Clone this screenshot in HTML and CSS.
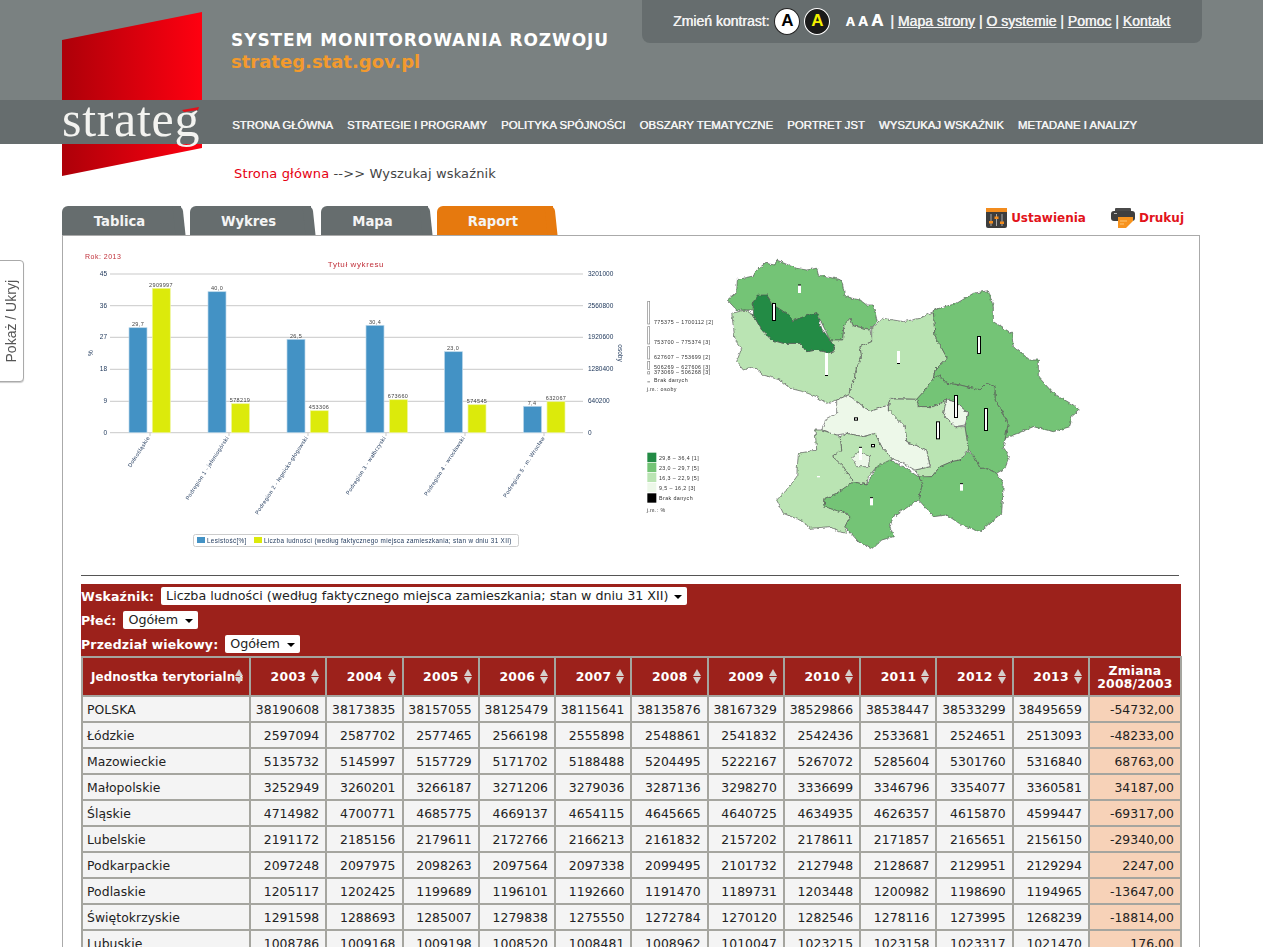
FILE: index.html
```html
<!DOCTYPE html>
<html lang="pl">
<head>
<meta charset="utf-8">
<title>Strateg</title>
<link rel="stylesheet" href="styles.css">
</head>
<body>
<div class="logo">
  <svg class="logo-mark" width="140" height="164" viewBox="0 0 140 164">
    <defs><linearGradient id="lg" x1="0" x2="1" y1="0" y2="0"><stop offset="0" stop-color="#ad0009"/><stop offset="1" stop-color="#ff0010"/></linearGradient></defs>
    <polygon points="0,28 140,0 140,136 0,164" fill="url(#lg)"/>
  </svg>
</div>
<header class="top">
  <div class="site-title">
    <div class="site-name">SYSTEM MONITOROWANIA ROZWOJU</div>
    <div class="site-url">strateg.stat.gov.pl</div>
  </div>
  <div class="tools">
    <span>Zmień kontrast:</span>
    <span class="contrast contrast-w">A</span>
    <span class="contrast contrast-b">A</span>
    <span class="sizes"><span class="s1">A</span><span class="s2">A</span><span class="s3">A</span></span>
    <span class="links">| <a href="#">Mapa strony</a> | <a href="#">O systemie</a> | <a href="#">Pomoc</a> | <a href="#">Kontakt</a></span>
  </div>
</header>
<nav class="nav">
  <div class="logo-word">strateg<svg class="flick" width="17" height="5" viewBox="0 0 17 5"><polygon points="0,3 17,0 16,3 2,5" fill="#e3101a"/></svg></div>
  <a href="#">STRONA GŁÓWNA</a><a href="#">STRATEGIE I PROGRAMY</a><a href="#">POLITYKA SPÓJNOŚCI</a><a href="#">OBSZARY TEMATYCZNE</a><a href="#">PORTRET JST</a><a href="#">WYSZUKAJ WSKAŹNIK</a><a href="#">METADANE I ANALIZY</a>
</nav>
<div class="crumb"><a href="#">Strona główna</a> --&gt;&gt; Wyszukaj wskaźnik</div>
<div class="tabbar">
  <a class="tab t1" href="#">Tablica</a>
  <a class="tab t2" href="#">Wykres</a>
  <a class="tab t3" href="#">Mapa</a>
  <a class="tab t4 active" href="#">Raport</a>
  <div class="actions">
    <a class="action act-set" href="#">
      <svg width="21" height="20" viewBox="0 0 21 20"><rect x="0" y="0" width="21" height="20" rx="2" fill="#3d3d3d"/><rect x="0" y="0" width="21" height="4" fill="#f28c1e"/><path d="M5 6v12M10.500 6v12M16 6v12" stroke="#aaa" stroke-width="1"/><rect x="3" y="13" width="4" height="2.500" fill="#f28c1e"/><rect x="8.500" y="8.500" width="4" height="2.500" fill="#f28c1e"/><rect x="14" y="13.500" width="4" height="2.500" fill="#f28c1e"/></svg>
      <span>Ustawienia</span>
    </a>
    <a class="action act-print" href="#">
      <svg width="24" height="20" viewBox="0 0 24 20"><rect x="4" y="0" width="16" height="4" rx="1" fill="#4a4a4a"/><path d="M3 3h18a3 3 0 0 1 3 3v4a3 3 0 0 1-3 3H3a3 3 0 0 1-3-3V6a3 3 0 0 1 3-3z" fill="#3f3f3f"/><rect x="3" y="5" width="3" height="1" fill="#bbb"/><path d="M7 9h15v4l-7 7H7z" fill="#f7931e"/><path d="M9 13h7M9 16h4" stroke="#ffc877" stroke-width="1"/></svg>
      <span>Drukuj</span>
    </a>
  </div>
</div>
<main class="panel">
  <div class="graphs">
    <svg class="chart" width="559" height="310" viewBox="81 245 559 310">
      <g class="grid">
        <path d="M110 274H583M110 305.700H583M110 337.300H583M110 369.300H583M110 401.300H583M110 432.700H583"/>
        <path d="M150 433v3M229 433v3M308 433v3M386 433v3M465 433v3M544 433v3"/>
      </g>
      <text class="rok" x="85" y="259">Rok: 2013</text>
      <text class="ctitle" x="356" y="267">Tytuł wykresu</text>
      <g class="ytick lefty">
        <text x="107" y="276">45</text><text x="107" y="308">36</text><text x="107" y="339">27</text><text x="107" y="371">18</text><text x="107" y="403">9</text><text x="107" y="435">0</text>
      </g>
      <g class="ytick">
        <text x="588" y="276">3201000</text><text x="588" y="308">2560800</text><text x="588" y="339">1920600</text><text x="588" y="371">1280400</text><text x="588" y="403">640200</text><text x="588" y="435">0</text>
      </g>
      <text class="ytick axis" transform="translate(93 353) rotate(-90)">%</text>
      <text class="ytick axis" transform="translate(618 353) rotate(90)">osoby</text>
      <g class="bars-a">
        <rect x="129" y="327.700" width="18" height="105"/><rect x="208" y="291.700" width="18" height="141"/><rect x="287" y="339.300" width="18" height="93.400"/><rect x="366" y="325.300" width="18" height="107.400"/><rect x="444.500" y="351.700" width="18" height="81"/><rect x="523.500" y="406.300" width="18" height="26.400"/>
      </g>
      <g class="bars-b">
        <rect x="152.300" y="288.300" width="18" height="144.400"/><rect x="231.500" y="403.700" width="18" height="29"/><rect x="310.300" y="410.700" width="18" height="22"/><rect x="389.500" y="399.700" width="18" height="33"/><rect x="468" y="404.700" width="18" height="28"/><rect x="547" y="401.700" width="18" height="31"/>
      </g>
      <g class="vals">
        <text x="138" y="326">29,7</text><text x="161" y="287">2909997</text><text x="217" y="290">40,0</text><text x="240" y="402">578219</text><text x="296" y="338">26,5</text><text x="319" y="409">453306</text><text x="375" y="324">30,4</text><text x="398" y="398">673660</text><text x="453" y="350">23,0</text><text x="477" y="403">574545</text><text x="532" y="405">7,4</text><text x="556" y="400">632067</text>
      </g>
      <g class="cats">
        <text transform="translate(150 438) rotate(-57)">Dolnośląskie</text>
        <text transform="translate(229 438) rotate(-57)">Podregion 1 - jeleniogórski</text>
        <text transform="translate(308 438) rotate(-57)">Podregion 2 - legnicko-głogowski</text>
        <text transform="translate(386 438) rotate(-57)">Podregion 3 - wałbrzyski</text>
        <text transform="translate(465 438) rotate(-57)">Podregion 4 - wrocławski</text>
        <text transform="translate(545 438) rotate(-57)">Podregion 5 - m. Wrocław</text>
      </g>
      <rect class="lbox" x="193.500" y="534.500" width="325" height="12" rx="2"/>
      <rect x="197" y="537" width="8" height="6" fill="#4392c5"/>
      <text class="ltext" x="207" y="543">Lesistość[%]</text>
      <rect x="254" y="537" width="8" height="6" fill="#dcea0b"/>
      <text class="ltext" x="264" y="543">Liczba ludności (według faktycznego miejsca zamieszkania; stan w dniu 31 XII)</text>
    </svg>
    <svg class="map" width="450" height="310" viewBox="0 0 1350 930">
      <defs><filter id="rough" x="-5%" y="-5%" width="110%" height="110%" color-interpolation-filters="sRGB"><feTurbulence type="fractalNoise" baseFrequency="0.09" numOctaves="2" seed="4"/><feDisplacementMap in="SourceGraphic" scale="11" xChannelSelector="R" yChannelSelector="G"/></filter></defs>
      <g class="regions" filter="url(#rough)">
        <polygon class="c2" points="262,150 290,125 292,88 340,78 350,60 375,40 405,45 410,30 445,45 470,55 500,60 530,55 535,75 605,90 615,140 660,150 680,165 700,165 712,215 690,238 640,228 630,205 612,225 608,270 570,270 530,188 460,212 400,165 380,135 340,155 340,180 290,180"/>
        <polygon class="c3" points="275,190 315,180 340,195 365,240 395,270 430,280 480,280 500,305 530,300 575,310 585,295 570,270 608,270 612,225 630,205 640,228 690,238 695,275 660,290 665,320 650,350 640,400 625,435 590,450 560,460 530,440 490,425 450,415 420,390 370,375 340,350 310,360 290,335 305,295 285,270"/>
        <polygon class="c1" points="340,155 355,135 380,135 400,165 440,190 460,212 490,200 530,188 545,235 570,270 585,295 575,310 530,300 500,305 480,280 430,280 395,270 365,240 340,195"/>
        <polygon class="c3" points="695,235 730,205 790,215 840,205 880,185 885,260 900,285 922,325 885,360 880,385 860,415 830,448 750,445 745,465 690,485 625,435 640,400 650,350 665,320 660,290 695,275"/>
        <polygon class="c2" points="880,180 950,160 1000,130 1045,122 1060,170 1060,215 1115,250 1120,290 1170,330 1195,330 1195,380 1240,430 1300,465 1318,480 1295,500 1290,530 1240,545 1180,530 1145,545 1095,565 1105,520 1065,450 1065,410 1040,400 1020,420 960,405 920,400 900,375 880,385 885,360 922,325 900,285 885,260"/>
        <polygon class="c2" points="830,448 860,415 880,385 900,375 920,400 960,405 1020,420 1040,400 1065,410 1065,450 1105,520 1095,565 1090,595 1108,620 1095,655 1070,670 1040,655 1020,655 1005,625 985,600 975,530 985,490 945,455 920,450 880,470 835,470"/>
        <polygon class="c3" points="750,447 830,448 835,470 880,470 920,450 910,495 945,530 975,530 985,600 960,630 935,635 900,650 875,680 840,685 825,660 870,650 860,600 800,575 795,530 745,480"/>
        <polygon class="c4" points="920,450 945,455 985,490 975,525 945,530 910,495"/>
        <polygon class="c4" points="590,450 625,435 690,485 745,465 745,480 795,530 800,575 860,600 870,650 825,660 790,640 755,625 725,590 705,550 670,560 620,550 590,555 545,540 560,505 590,490"/>
        <polygon class="c3" points="600,560 620,550 670,560 705,550 725,590 755,625 750,650 710,650 685,680 680,705 640,695 610,650 578,620 605,600"/>
        <polygon class="c4" points="635,620 655,605 690,620 685,650 650,650"/>
        <polygon class="c3" points="525,540 545,540 590,555 600,560 605,600 578,620 610,650 640,695 620,710 590,730 555,745 552,770 620,790 630,800 615,830 620,850 595,845 570,830 510,835 490,815 430,790 410,750 445,715 470,680 475,610 530,600"/>
        <polygon class="c2" points="552,770 555,745 590,730 640,695 680,705 710,650 750,630 790,650 835,680 848,700 835,750 760,800 750,830 760,860 725,870 700,895 660,880 615,830 630,800 620,790"/>
        <polygon class="c2" points="835,680 875,680 900,650 935,635 960,630 985,605 1005,625 1020,655 1040,655 1070,670 1090,700 1085,790 1060,810 1020,845 965,825 920,795 880,800 845,760 835,750 848,700"/>
      </g>
      <g class="mbars">
        <rect x="397.500" y="160.500" width="9" height="51"/><rect x="1012.500" y="259.500" width="9" height="51"/><rect x="943.500" y="436.500" width="9" height="66"/><rect x="1033.500" y="475.500" width="9" height="66"/><rect x="889.500" y="515.500" width="9" height="51"/><rect x="643.500" y="503.500" width="9" height="7"/><rect x="694.500" y="583.500" width="9" height="7"/>
      </g>
      <g class="mbars-open">
        <rect x="474" y="105" width="9" height="24"/><rect x="555" y="309" width="9" height="69"/><rect x="771" y="303" width="9" height="39"/><rect x="657" y="591" width="9" height="39"/><rect x="531" y="678" width="9" height="4"/><rect x="690" y="742" width="9" height="24"/><rect x="960" y="700" width="9" height="22"/>
      </g>
      <g class="mticks">
        <path d="M474 105h9M555 376.500h9M771 340.500h9M657 592h9M690 743h9M960 701h9"/>
      </g>
      <g class="lbars">
        <rect x="23" y="154" width="6" height="68"/><rect x="23" y="230" width="6" height="52"/><rect x="23" y="290" width="6" height="37"/><rect x="23" y="334" width="6" height="24"/><rect x="23" y="365" width="6" height="7"/><rect x="23" y="395" width="6" height="1"/>
      </g>
      <g class="mtext">
        <text x="42" y="221">775375 – 1700112 [2]</text><text x="42" y="281">753700 – 775374 [3]</text><text x="42" y="326">627607 – 753699 [2]</text><text x="42" y="357">506269 – 627606 [3]</text><text x="42" y="372">373069 – 506268 [3]</text><text x="42" y="395">Brak danych</text><text x="20" y="423">j.m.: osoby</text>
        <text x="57" y="629">29,8 – 36,4 [1]</text><text x="57" y="659">23,0 – 29,7 [5]</text><text x="57" y="689">16,3 – 22,9 [5]</text><text x="57" y="719">9,5 – 16,2 [3]</text><text x="57" y="749">Brak danych</text><text x="20" y="785">j.m.: %</text>
      </g>
      <rect class="c1" x="22" y="608" width="27" height="28"/><rect class="c2" x="22" y="638" width="27" height="28"/><rect class="c3" x="22" y="668" width="27" height="28"/><rect class="c4" x="22" y="698" width="27" height="28"/><rect x="22" y="730" width="27" height="28" fill="#000"/>
    </svg>
  </div>
  <hr class="rule">
  <section class="report">
    <div class="filters">
      <div class="filter"><label>Wskaźnik:</label><div class="select sel-long"><span>Liczba ludności (według faktycznego miejsca zamieszkania; stan w dniu 31 XII)</span></div></div>
      <div class="filter"><label>Płeć:</label><div class="select sel-short"><span>Ogółem</span></div></div>
      <div class="filter"><label>Przedział wiekowy:</label><div class="select sel-short"><span>Ogółem</span></div></div>
    </div>
    <table class="data">
      <colgroup><col class="col-name"><col class="col-y"><col class="col-y"><col class="col-y"><col class="col-y"><col class="col-y"><col class="col-y"><col class="col-y"><col class="col-y"><col class="col-y"><col class="col-y"><col class="col-y"><col class="col-z"></colgroup>
      <thead>
        <tr>
          <th class="name-h">Jednostka terytorialna<i class="sort"></i></th>
          <th>2003<i class="sort"></i></th><th>2004<i class="sort"></i></th><th>2005<i class="sort"></i></th><th>2006<i class="sort"></i></th><th>2007<i class="sort"></i></th><th>2008<i class="sort"></i></th><th>2009<i class="sort"></i></th><th>2010<i class="sort"></i></th><th>2011<i class="sort"></i></th><th>2012<i class="sort"></i></th><th>2013<i class="sort"></i></th>
          <th class="z-h">Zmiana<br>2008/2003</th>
        </tr>
      </thead>
      <tbody>
        <tr><td>POLSKA</td><td>38190608</td><td>38173835</td><td>38157055</td><td>38125479</td><td>38115641</td><td>38135876</td><td>38167329</td><td>38529866</td><td>38538447</td><td>38533299</td><td>38495659</td><td>-54732,00</td></tr>
        <tr><td>Łódzkie</td><td>2597094</td><td>2587702</td><td>2577465</td><td>2566198</td><td>2555898</td><td>2548861</td><td>2541832</td><td>2542436</td><td>2533681</td><td>2524651</td><td>2513093</td><td>-48233,00</td></tr>
        <tr><td>Mazowieckie</td><td>5135732</td><td>5145997</td><td>5157729</td><td>5171702</td><td>5188488</td><td>5204495</td><td>5222167</td><td>5267072</td><td>5285604</td><td>5301760</td><td>5316840</td><td>68763,00</td></tr>
        <tr><td>Małopolskie</td><td>3252949</td><td>3260201</td><td>3266187</td><td>3271206</td><td>3279036</td><td>3287136</td><td>3298270</td><td>3336699</td><td>3346796</td><td>3354077</td><td>3360581</td><td>34187,00</td></tr>
        <tr><td>Śląskie</td><td>4714982</td><td>4700771</td><td>4685775</td><td>4669137</td><td>4654115</td><td>4645665</td><td>4640725</td><td>4634935</td><td>4626357</td><td>4615870</td><td>4599447</td><td>-69317,00</td></tr>
        <tr><td>Lubelskie</td><td>2191172</td><td>2185156</td><td>2179611</td><td>2172766</td><td>2166213</td><td>2161832</td><td>2157202</td><td>2178611</td><td>2171857</td><td>2165651</td><td>2156150</td><td>-29340,00</td></tr>
        <tr><td>Podkarpackie</td><td>2097248</td><td>2097975</td><td>2098263</td><td>2097564</td><td>2097338</td><td>2099495</td><td>2101732</td><td>2127948</td><td>2128687</td><td>2129951</td><td>2129294</td><td>2247,00</td></tr>
        <tr><td>Podlaskie</td><td>1205117</td><td>1202425</td><td>1199689</td><td>1196101</td><td>1192660</td><td>1191470</td><td>1189731</td><td>1203448</td><td>1200982</td><td>1198690</td><td>1194965</td><td>-13647,00</td></tr>
        <tr><td>Świętokrzyskie</td><td>1291598</td><td>1288693</td><td>1285007</td><td>1279838</td><td>1275550</td><td>1272784</td><td>1270120</td><td>1282546</td><td>1278116</td><td>1273995</td><td>1268239</td><td>-18814,00</td></tr>
        <tr><td>Lubuskie</td><td>1008786</td><td>1009168</td><td>1009198</td><td>1008520</td><td>1008481</td><td>1008962</td><td>1010047</td><td>1023215</td><td>1023158</td><td>1023317</td><td>1021470</td><td>176,00</td></tr>
      </tbody>
    </table>
  </section>
</main>
<aside class="side"><span>Pokaż / Ukryj</span></aside>
</body>
</html>
```
FILE: styles.css
```css
html, body { margin: 0; padding: 0; height: 947px; overflow: hidden; background: #fff; }
body { position: relative; font-family: "DejaVu Sans", Verdana, sans-serif; color: #333; }
a { color: inherit; text-decoration: none; }

.logo { position: absolute; left: 62px; top: 12px; z-index: 1; line-height: 0; }

.top { height: 100px; background: #7a8181; position: relative; display: flex; align-items: flex-start; }
.site-title { margin: 30px 0 0 231px; position: relative; z-index: 2; font-weight: bold; width: 411px; }
.site-name { font-size: 17px; line-height: 20px; color: #fff; letter-spacing: 0.92px; white-space: nowrap; }
.site-url { font-size: 18px; line-height: 24px; color: #f39a2d; white-space: nowrap; }

.tools { width: 560px; height: 43px; box-sizing: border-box; background: #666d6e; border-radius: 0 0 8px 8px; display: flex; align-items: center; padding: 0 0 1px 31px; font-family: "Liberation Sans", Arial, sans-serif; font-size: 14px; color: #f2f2f2; white-space: nowrap; text-shadow: 0.4px 0 0 #f2f2f2; }
.contrast { width: 24px; height: 25px; border: 1px solid #222; border-radius: 50%; display: flex; align-items: center; justify-content: center; font-size: 17px; font-weight: bold; text-shadow: none; }
.contrast-w { background: #fff; color: #000; margin-left: 5px; }
.contrast-b { background: #1a1a1a; color: #f4f000; margin-left: 4px; border-color: #fff; }
.sizes { margin-left: 15px; display: flex; align-items: baseline; gap: 3px; color: #fff; font-weight: bold; }
.s1 { font-size: 13px; } .s2 { font-size: 14px; } .s3 { font-size: 17px; }
.links { margin-left: 7px; }
.links a { text-decoration: underline; }

.nav { height: 44px; box-sizing: border-box; padding: 5px 0 0 232px; background: #666d6e; position: relative; z-index: 2; display: flex; align-items: center; gap: 14px; font-family: "Liberation Sans", Arial, sans-serif; font-size: 11.430px; color: #f4f4f4; white-space: nowrap; }
.nav a { text-shadow: 0.4px 0 0 #f4f4f4; }
.logo-word { position: absolute; left: 62px; top: -6px; font-family: "Liberation Serif", serif; font-size: 50px; line-height: 50px; color: #f3f3f0; letter-spacing: 0.7px; }
.flick { position: absolute; right: 1px; top: 13px; }

.crumb { margin: 22px 0 0 234px; font-size: 13px; line-height: 16px; color: #444; position: relative; z-index: 2; letter-spacing: 0.14px; }
.crumb a { color: #e60012; }

.tabbar { display: flex; margin: 24px 0 0 62px; height: 29px; position: relative; z-index: 2; width: 1137px; }
.tab { position: relative; display: flex; align-items: center; justify-content: center; height: 29px; box-sizing: border-box; background: #666d6e; color: #f4f4f4; font-size: 13.200px; font-weight: bold; border-radius: 6px 0 0 0; padding: 2px 4px 0 0; }
.tab::after { content: ""; position: absolute; right: -3px; top: 0; bottom: 0; width: 10px; background: inherit; border-radius: 0 5px 0 0; transform: skewX(6deg); }
.t1 { width: 119px; margin-right: 9px; }
.t2 { width: 121px; margin-right: 10px; }
.t3 { width: 107px; margin-right: 9px; }
.t4 { width: 116px; }
.tab.active { background: #e6790e; }
.actions { margin-left: auto; margin-right: 15px; display: flex; gap: 25px; align-items: flex-start; margin-top: 2px; }
.action { display: flex; align-items: center; gap: 4px; color: #e2131b; font-size: 12px; font-weight: bold; height: 20px; }

.panel { margin-left: 62px; width: 1118px; height: 712px; border: 1px solid #aaa; position: relative; padding: 9px 0 0 18px; box-sizing: content-box; }
.graphs { display: flex; align-items: flex-start; height: 315px; }
.chart, .map { display: block; flex: none; filter: blur(0.3px); }
.map { margin-top: 5px; }
.grid path { stroke: #c9c9c9; stroke-width: 1; fill: none; }
.chart text { font-family: "Liberation Sans", Arial, sans-serif; }
.rok { font-size: 7px; fill: #c0303a; letter-spacing: 0.5px; }
.ctitle { font-size: 8px; fill: #c0303a; text-anchor: middle; letter-spacing: 0.6px; }
.ytick text, .ytick.axis { font-size: 6.500px; fill: #20395c; }
.lefty text { text-anchor: end; }
.axis { text-anchor: middle; }
.bars-a rect { fill: #4392c5; stroke: #bcd8ea; stroke-width: 0.7; }
.bars-b rect { fill: #dcea0b; stroke: #eef6a0; stroke-width: 0.7; }
.vals text { font-size: 5.500px; fill: #444; text-anchor: middle; letter-spacing: 0.35px; }
.cats text { font-size: 5.500px; fill: #20395c; text-anchor: end; letter-spacing: 0.35px; }
.lbox { fill: #fff; stroke: #ccc; stroke-width: 1; }
.ltext { font-size: 6.300px; fill: #20395c; letter-spacing: 0.35px; }
.regions polygon { stroke: #555; stroke-width: 2; stroke-linejoin: round; }
.c1 { fill: #238b45; }
.c2 { fill: #74c476; }
.c3 { fill: #bae4b3; }
.c4 { fill: #edf8e9; }
.mbars rect { fill: #fff; stroke: #000; stroke-width: 3; }
.mbars-open rect { fill: #fff; }
.mticks path { stroke: #000; stroke-width: 3; fill: none; }
.lbars rect { fill: #fff; stroke: #888; stroke-width: 2; }
.mtext text { font-family: "Liberation Sans", Arial, sans-serif; font-size: 16px; fill: #333; letter-spacing: 1.2px; }

.rule { margin: 15px 0 0 0; width: 1098px; height: 1px; border: 0; background: #555; }
.report { margin-top: 8px; width: 1100px; }
.filters { background: #9c211b; height: 72px; box-sizing: border-box; padding-top: 3px; display: flex; flex-direction: column; gap: 6px; }
.filter { display: flex; align-items: center; height: 18px; font-size: 12.700px; }
.filter label { color: #fff; font-weight: bold; margin-right: 7px; font-size: 12.500px; letter-spacing: 0.15px; }
.select { position: relative; height: 18px; box-sizing: border-box; background: #fff; border-radius: 2px; color: #222; padding-left: 5px; line-height: 18px; white-space: nowrap; }
.select::after { content: ""; position: absolute; right: 5px; top: 8px; border-left: 4px solid transparent; border-right: 4px solid transparent; border-top: 4px solid #000; }
.sel-long { width: 526px; }
.sel-short { width: 75px; }
.data { border-collapse: collapse; table-layout: fixed; width: 1100px; font-size: 12.400px; }
.col-name { width: 168px; }
.col-y { width: 76.270px; }
.col-z { width: 92px; }
.data th, .data td { border: 2px solid #a5a59f; }
.data th { background: #9c211b; color: #fff; height: 39px; padding: 0 19px 0 0; font-weight: bold; position: relative; text-align: right; box-sizing: border-box; letter-spacing: 0.3px; }
.data th.name-h { text-align: left; padding: 0 0 0 8px; white-space: nowrap; font-size: 11.900px; letter-spacing: 0.1px; }
.data th.z-h { text-align: center; padding: 0; line-height: 13px; letter-spacing: 0.2px; }
.sort { position: absolute; right: 5px; top: 11px; width: 9px; height: 15px; }
.sort::before, .sort::after { content: ""; position: absolute; left: 0; border-left: 4.500px solid transparent; border-right: 4.500px solid transparent; }
.sort::before { top: 0; border-bottom: 7px solid #d5cfcb; }
.sort::after { bottom: 0; border-top: 7px solid #d5cfcb; }
.data td { height: 24px; box-sizing: content-box; padding: 0 6px 0 0; background: #f4f4f4; color: #222; text-align: right; white-space: nowrap; letter-spacing: 0.05px; }
.data td:first-child { text-align: left; padding: 0 0 0 4px; }
.data td:last-child { background: #f7d2b8; }

.side { position: absolute; left: -1px; top: 260px; width: 23px; height: 120px; background: #fff; border: 1px solid #aaa; border-radius: 0 4px 4px 0; display: flex; align-items: center; justify-content: center; z-index: 3; box-shadow: 0 1px 1px #ccc; box-sizing: content-box; }
.side span { writing-mode: vertical-rl; transform: rotate(180deg); font-family: "Liberation Sans", Arial, sans-serif; font-size: 14px; color: #555; white-space: nowrap; margin-right: 2px; }
```
